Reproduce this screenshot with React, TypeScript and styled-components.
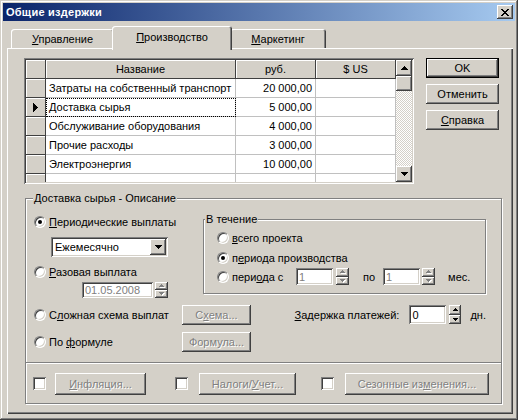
import React from "react";
import styled, { createGlobalStyle, css } from "styled-components";

const GlobalStyle = createGlobalStyle`
  html, body {
    margin: 0;
    padding: 0;
    background: #d4d0c8;
  }
  body {
    font-family: "Liberation Sans", Arial, sans-serif;
    font-size: 11px;
    color: #000;
  }
  * {
    box-sizing: border-box;
  }
`;

const raised = css`
  background: #d4d0c8;
  box-shadow: inset -1px -1px #404040, inset 1px 1px #fff,
    inset -2px -2px #808080, inset 2px 2px #d4d0c8;
`;

const sunken = css`
  box-shadow: inset 1px 1px #808080, inset -1px -1px #fff,
    inset 2px 2px #404040, inset -2px -2px #d4d0c8;
`;

const etched = css`
  border: 1px solid #808080;
  box-shadow: inset 1px 1px #fff, 1px 1px #fff;
`;

// pixel glyphs for the classic arrows and the close cross
const CLOSE = ["xx....xx", ".xx..xx.", "..xxxx..", "...xx...", "..xxxx..", ".xx..xx.", "xx....xx"];
const UP7 = ["...x...", "..xxx..", ".xxxxx.", "xxxxxxx"];
const DOWN7 = [...UP7].reverse();
const UP5 = ["..x..", ".xxx.", "xxxxx"];
const DOWN5 = [...UP5].reverse();
const POINTER = ["x....", "xx...", "xxx..", "xxxx.", "xxxxx", "xxxx.", "xxx..", "xx...", "x...."];

const Pix: React.FC<{ rows: string[]; color?: string; shadow?: string }> = ({
  rows,
  color = "#000",
  shadow,
}) => {
  const cells: [number, number][] = [];
  rows.forEach((r, y) =>
    r.split("").forEach((c, x) => {
      if (c === "x") cells.push([x, y]);
    })
  );
  const extra = shadow ? 1 : 0;
  return (
    <svg width={rows[0].length + extra} height={rows.length + extra} shapeRendering="crispEdges">
      {shadow &&
        cells.map(([x, y]) => (
          <rect key={`s${x}-${y}`} x={x + 1} y={y + 1} width={1} height={1} fill={shadow} />
        ))}
      {cells.map(([x, y]) => (
        <rect key={`${x}-${y}`} x={x} y={y} width={1} height={1} fill={color} />
      ))}
    </svg>
  );
};

const U = styled.span`
  text-decoration: underline;
  text-underline-offset: 1px;
`;

const Window = styled.div`
  width: 518px;
  height: 420px;
  padding: 3px;
  background: #d4d0c8;
  box-shadow: inset -1px -1px #404040, inset 1px 1px #d4d0c8,
    inset -2px -2px #808080, inset 2px 2px #fff;
  display: flex;
  flex-direction: column;
  overflow: hidden;
`;

const TitleBar = styled.div`
  height: 18px;
  flex-shrink: 0;
  background: linear-gradient(to right, #0a246a, #a6caf0);
  display: flex;
  align-items: center;
  justify-content: space-between;
  padding: 0 2px 0 3px;
`;

const TitleText = styled.span`
  color: #fff;
  font-weight: bold;
  font-size: 11px;
  letter-spacing: 0.25px;
`;

const CloseBtn = styled.div`
  width: 16px;
  height: 14px;
  ${raised};
  display: flex;
  align-items: center;
  justify-content: center;
`;

const Body = styled.div`
  flex: 1;
  display: flex;
  flex-direction: column;
  padding: 5px 2px 3px 4px;
`;

const TabStrip = styled.div`
  height: 22px;
  display: flex;
  align-items: flex-end;
  padding-left: 4px;
`;

const Tab = styled.div<{ $w: number; $active?: boolean }>`
  width: ${(p) => (p.$active ? p.$w + 4 : p.$w)}px;
  height: ${(p) => (p.$active ? 24 : 19)}px;
  margin: ${(p) => (p.$active ? "0 -2px -2px" : "0")};
  position: relative;
  z-index: ${(p) => (p.$active ? 1 : 0)};
  background: #d4d0c8;
  border-radius: 3px 3px 0 0;
  box-shadow: inset 1px 1px #fff, inset -1px 0 #404040, inset -2px 0 #808080;
  display: flex;
  align-items: center;
  justify-content: center;
  padding-bottom: ${(p) => (p.$active ? 3 : 0)}px;
  white-space: nowrap;
`;

const Panel = styled.div`
  flex: 1;
  background: #d4d0c8;
  box-shadow: inset 1px 1px #fff, inset -1px -1px #404040, inset -2px -2px #808080;
  padding: 10px 0 0 17px;
  display: flex;
  flex-direction: column;
`;

const TopRow = styled.div`
  display: flex;
  align-items: flex-start;
  gap: 12px;
`;

const Grid = styled.div`
  width: 390px;
  height: 126px;
  padding: 2px;
  ${sunken};
  display: flex;
`;

const Table = styled.div`
  width: 370px;
  height: 122px;
  overflow: hidden;
  display: grid;
  grid-template-columns: 20px 190px 80px 80px;
  grid-auto-rows: 19px;
  align-content: start;
  background: #fff;
`;

const HeadCell = styled.div`
  background: #d4d0c8;
  border-right: 1px solid #404040;
  border-bottom: 1px solid #404040;
  box-shadow: inset 1px 1px #fff;
  display: flex;
  align-items: center;
  justify-content: center;
`;

const Cell = styled.div<{ $num?: boolean; $focus?: boolean }>`
  background: #fff;
  border-right: 1px solid #c0c0c0;
  border-bottom: 1px solid #c0c0c0;
  padding: 0 3px;
  display: flex;
  align-items: center;
  justify-content: ${(p) => (p.$num ? "flex-end" : "flex-start")};
  white-space: nowrap;
  overflow: hidden;
  ${(p) =>
    p.$focus &&
    css`
      outline: 1px dotted #000;
      outline-offset: -1px;
    `}
`;

const ScrollBar = styled.div`
  width: 16px;
  display: flex;
  flex-direction: column;
`;

const ScrollBtn = styled.div`
  width: 16px;
  height: 16px;
  ${raised};
  display: flex;
  align-items: center;
  justify-content: center;
  flex-shrink: 0;
`;

const Thumb = styled.div`
  height: 15px;
  ${raised};
`;

const Track = styled.div`
  flex: 1;
  background: repeating-conic-gradient(#d4d0c8 0 25%, #fff 0 50%) 0 0 / 2px 2px;
`;

const ButtonCol = styled.div`
  display: flex;
  flex-direction: column;
  gap: 6px;
`;

const Button = styled.div<{ $w: number; $h?: number; $default?: boolean; $disabled?: boolean }>`
  width: ${(p) => p.$w}px;
  height: ${(p) => p.$h ?? 20}px;
  flex-shrink: 0;
  display: flex;
  align-items: center;
  justify-content: center;
  white-space: nowrap;
  background: #d4d0c8;
  box-shadow: ${(p) =>
    p.$default
      ? "inset 0 0 0 1px #000, inset -2px -2px #404040, inset 2px 2px #fff, inset -3px -3px #808080"
      : "inset -1px -1px #404040, inset 1px 1px #fff, inset -2px -2px #808080"};
  color: ${(p) => (p.$disabled ? "#808080" : "#000")};
  text-shadow: ${(p) => (p.$disabled ? "1px 1px #fff" : "none")};
`;

const Frame = styled.div`
  ${etched};
  margin: 14px 0 0 1px;
  width: 477px;
  display: flex;
  flex-direction: column;
`;

const InnerBox = styled.div`
  ${etched};
  width: 283px;
  height: 75px;
  margin-top: 5px;
  padding-left: 13px;
  display: flex;
  flex-direction: column;
`;

const Legend = styled.div<{ $left: number }>`
  width: fit-content;
  margin: -7px 0 0 ${(p) => p.$left}px;
  padding: 0 1px;
  line-height: 13px;
  background: #d4d0c8;
  white-space: nowrap;
`;

const GroupContent = styled.div`
  padding: 9px 15px 10px 8px;
  display: flex;
  flex-direction: column;
`;

const TopArea = styled.div`
  display: flex;
  align-items: flex-start;
`;

const LeftCol = styled.div`
  width: 169px;
  display: flex;
  flex-direction: column;
  align-items: flex-start;
`;

const Row = styled.div<{ $top?: number; $h?: number; $indent?: number; $gap?: number }>`
  display: flex;
  align-items: center;
  margin-top: ${(p) => p.$top ?? 0}px;
  margin-left: ${(p) => p.$indent ?? 0}px;
  height: ${(p) => (p.$h ? `${p.$h}px` : "auto")};
  gap: ${(p) => p.$gap ?? 0}px;
`;

const RadioLabel = styled.div<{ $w?: number; $top?: number }>`
  display: flex;
  align-items: center;
  gap: 3px;
  height: 16px;
  flex-shrink: 0;
  white-space: nowrap;
  margin-top: ${(p) => p.$top ?? 0}px;
  ${(p) => p.$w && `width: ${p.$w}px;`}
`;

const RadioMark = styled.span<{ $on?: boolean }>`
  width: 12px;
  height: 12px;
  flex-shrink: 0;
  position: relative;
  border-radius: 50%;
  background: #fff;
  border: 1px solid;
  border-color: #808080 #fff #fff #808080;
  box-shadow: inset 1px 1px #404040, inset -1px -1px #d4d0c8;

  &::after {
    content: "";
    display: ${(p) => (p.$on ? "block" : "none")};
    position: absolute;
    left: 3px;
    top: 3px;
    width: 4px;
    height: 4px;
    border-radius: 50%;
    background: #000;
  }
`;

const CheckBox = styled.span<{ $left: number }>`
  width: 13px;
  height: 13px;
  flex-shrink: 0;
  margin-left: ${(p) => p.$left}px;
  background: #fff;
  ${sunken};
`;

const Combo = styled.div`
  width: 117px;
  height: 20px;
  margin: 7px 0 0 17px;
  padding: 2px;
  background: #fff;
  ${sunken};
  display: flex;
  align-items: center;
`;

const ComboText = styled.span`
  flex: 1;
  padding-left: 2px;
`;

const DropBtn = styled.div`
  width: 16px;
  height: 16px;
  ${raised};
  display: flex;
  align-items: center;
  justify-content: center;
`;

const Field = styled.div<{ $w: number; $h: number; $disabled?: boolean; $left?: number }>`
  width: ${(p) => p.$w}px;
  height: ${(p) => p.$h}px;
  margin-left: ${(p) => p.$left ?? 0}px;
  flex-shrink: 0;
  padding: 0 3px;
  background: #fff;
  ${sunken};
  display: flex;
  align-items: center;
  color: ${(p) => (p.$disabled ? "#808080" : "#000")};
`;

const Spinner = styled.div<{ $w: number; $h: number; $left?: number }>`
  width: ${(p) => p.$w}px;
  height: ${(p) => p.$h}px;
  margin-left: ${(p) => p.$left ?? 2}px;
  flex-shrink: 0;
  display: flex;
  flex-direction: column;
`;

const SpinHalf = styled.div`
  flex: 1;
  background: #d4d0c8;
  box-shadow: inset -1px -1px #404040, inset 1px 1px #fff, inset -2px -2px #808080;
  display: flex;
  align-items: center;
  justify-content: center;
`;

const Text = styled.span<{ $left?: number }>`
  margin-left: ${(p) => p.$left ?? 0}px;
  white-space: nowrap;
`;

const Spacer = styled.div`
  flex: 1;
`;

const BottomBar = styled.div`
  height: 41px;
  border-top: 1px solid #808080;
  box-shadow: inset 0 1px #fff;
  padding: 1px 0 0 7px;
  display: flex;
  align-items: center;
`;

const Spin: React.FC<{ w: number; h: number; left?: number; disabled?: boolean }> = ({
  w,
  h,
  left,
  disabled,
}) => (
  <Spinner $w={w} $h={h} $left={left}>
    <SpinHalf>
      <Pix rows={UP5} color={disabled ? "#808080" : "#000"} shadow={disabled ? "#fff" : undefined} />
    </SpinHalf>
    <SpinHalf>
      <Pix rows={DOWN5} color={disabled ? "#808080" : "#000"} shadow={disabled ? "#fff" : undefined} />
    </SpinHalf>
  </Spinner>
);

const rows = [
  ["Затраты на собственный транспорт", "20 000,00"],
  ["Доставка сырья", "5 000,00"],
  ["Обслуживание оборудования", "4 000,00"],
  ["Прочие расходы", "3 000,00"],
  ["Электроэнергия", "10 000,00"],
  ["", ""],
];

export default function App() {
  return (
    <>
      <GlobalStyle />
      <Window>
        <TitleBar>
          <TitleText>Общие издержки</TitleText>
          <CloseBtn>
            <Pix rows={CLOSE} />
          </CloseBtn>
        </TitleBar>
        <Body>
          <TabStrip>
            <Tab $w={103}>
              <span>
                <U>У</U>правление
              </span>
            </Tab>
            <Tab $w={116} $active>
              <span>
                <U>П</U>роизводство
              </span>
            </Tab>
            <Tab $w={96}>
              <span>
                <U>М</U>аркетинг
              </span>
            </Tab>
          </TabStrip>
          <Panel>
            <TopRow>
              <Grid>
                <Table>
                  <HeadCell />
                  <HeadCell>Название</HeadCell>
                  <HeadCell>руб.</HeadCell>
                  <HeadCell>$ US</HeadCell>
                  {rows.map(([name, rub], i) => (
                    <React.Fragment key={i}>
                      <HeadCell>{i === 1 && <Pix rows={POINTER} />}</HeadCell>
                      <Cell $focus={i === 1}>{name}</Cell>
                      <Cell $num>{rub}</Cell>
                      <Cell />
                    </React.Fragment>
                  ))}
                </Table>
                <ScrollBar>
                  <ScrollBtn>
                    <Pix rows={UP7} />
                  </ScrollBtn>
                  <Thumb />
                  <Track />
                  <ScrollBtn>
                    <Pix rows={DOWN7} />
                  </ScrollBtn>
                </ScrollBar>
              </Grid>
              <ButtonCol>
                <Button $w={73} $default>
                  OK
                </Button>
                <Button $w={73}>Отменить</Button>
                <Button $w={73}>
                  <span>
                    <U>С</U>правка
                  </span>
                </Button>
              </ButtonCol>
            </TopRow>

            <Frame>
              <Legend $left={7}>Доставка сырья - Описание</Legend>
              <GroupContent>
                <TopArea>
                  <LeftCol>
                    <RadioLabel>
                      <RadioMark $on />
                      <span>
                        <U>П</U>ериодические выплаты
                      </span>
                    </RadioLabel>
                    <Combo>
                      <ComboText>Ежемесячно</ComboText>
                      <DropBtn>
                        <Pix rows={DOWN7} />
                      </DropBtn>
                    </Combo>
                    <RadioLabel $top={7}>
                      <RadioMark />
                      <span>
                        <U>Р</U>азовая выплата
                      </span>
                    </RadioLabel>
                    <Row $top={2} $indent={48}>
                      <Field $w={71} $h={16} $disabled>
                        01.05.2008
                      </Field>
                      <Spin w={13} h={16} disabled />
                    </Row>
                  </LeftCol>
                  <InnerBox>
                    <Legend $left={-12}>В течение</Legend>
                    <RadioLabel $top={4}>
                      <RadioMark />
                      <span>
                        <U>в</U>сего проекта
                      </span>
                    </RadioLabel>
                    <RadioLabel $top={4}>
                      <RadioMark $on />
                      <span>
                        п<U>е</U>риода производства
                      </span>
                    </RadioLabel>
                    <Row $top={2} $h={17}>
                      <RadioLabel $w={79}>
                        <RadioMark />
                        <span>
                          пери<U>о</U>да с
                        </span>
                      </RadioLabel>
                      <Field $w={37} $h={17} $disabled>
                        1
                      </Field>
                      <Spin w={13} h={17} left={3} disabled />
                      <Text $left={14}>по</Text>
                      <Field $w={37} $h={17} $left={8} $disabled>
                        1
                      </Field>
                      <Spin w={13} h={17} left={2} disabled />
                      <Text $left={13}>мес.</Text>
                    </Row>
                  </InnerBox>
                </TopArea>

                <Row $top={6} $h={21}>
                  <RadioLabel $w={148}>
                    <RadioMark />
                    <span>
                      С<U>л</U>ожная схема выплат
                    </span>
                  </RadioLabel>
                  <Button $w={69} $disabled>
                    <span>
                      С<U>х</U>ема...
                    </span>
                  </Button>
                  <Spacer />
                  <Text>
                    <U>З</U>адержка платежей:
                  </Text>
                  <Field $w={37} $h={19} $left={10}>
                    0
                  </Field>
                  <Spin w={12} h={19} left={3} />
                  <Text $left={9}>дн.</Text>
                </Row>

                <Row $top={7} $h={20}>
                  <RadioLabel $w={148}>
                    <RadioMark />
                    <span>
                      По <U>ф</U>ормуле
                    </span>
                  </RadioLabel>
                  <Button $w={69} $disabled>
                    Формула...
                  </Button>
                </Row>
              </GroupContent>

              <BottomBar>
                <CheckBox $left={0} />
                <Button $w={91} $h={22} $disabled style={{ marginLeft: 9 }}>
                  <span>
                    <U>И</U>нфляция...
                  </span>
                </Button>
                <CheckBox $left={29} />
                <Button $w={97} $h={22} $disabled style={{ marginLeft: 11 }}>
                  <span>
                    Налоги/<U>У</U>чет...
                  </span>
                </Button>
                <CheckBox $left={25} />
                <Button $w={144} $h={22} $disabled style={{ marginLeft: 11 }}>
                  <span>
                    Сезонные из<U>м</U>енения...
                  </span>
                </Button>
              </BottomBar>
            </Frame>
          </Panel>
        </Body>
      </Window>
    </>
  );
}
